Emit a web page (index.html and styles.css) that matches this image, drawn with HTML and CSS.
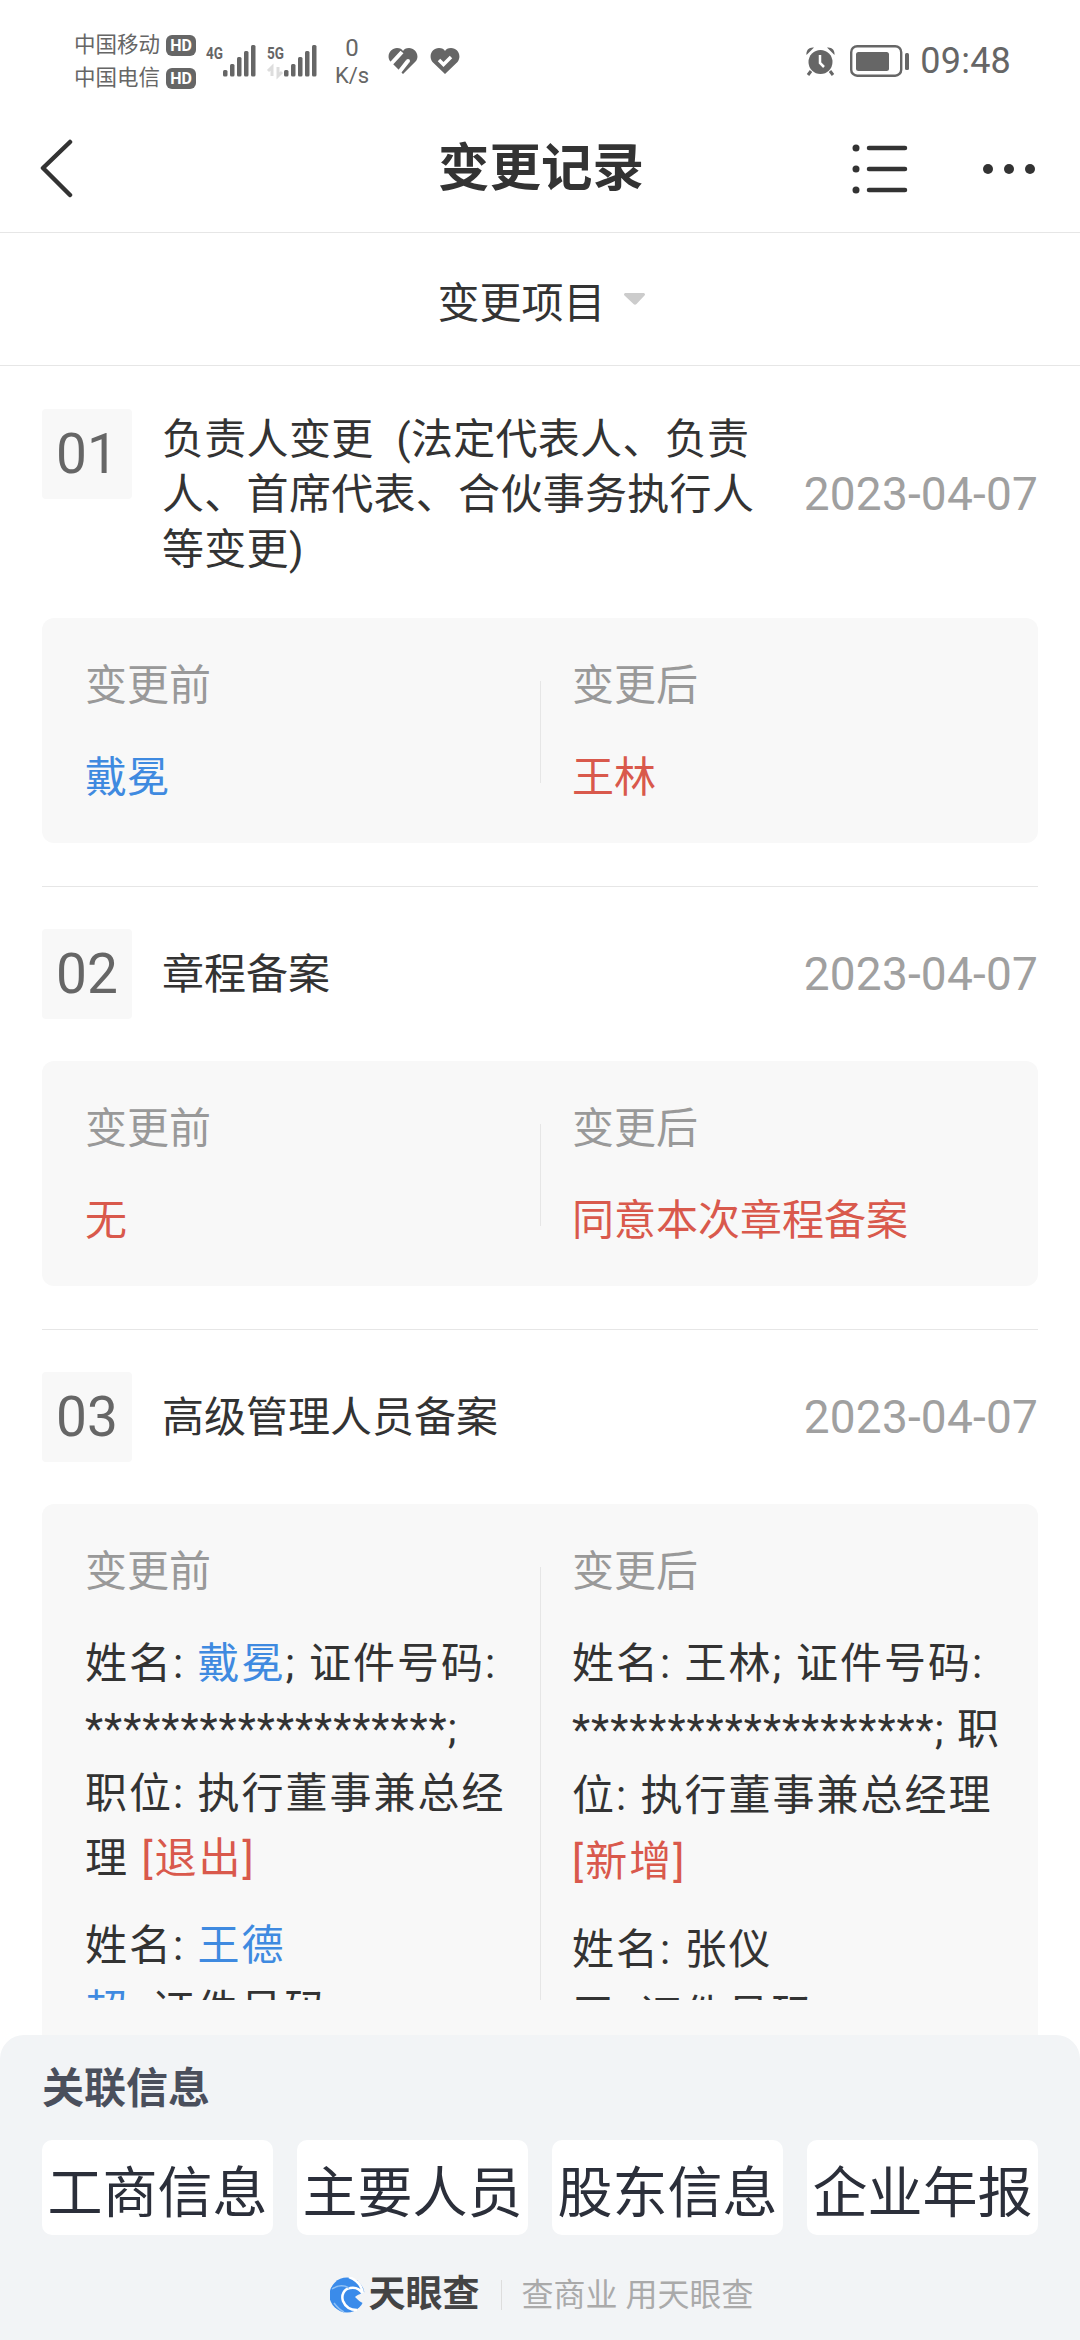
FILE: index.html
```html
<!DOCTYPE html>
<html lang="zh-CN">
<head>
<meta charset="utf-8">
<title>变更记录</title>
<link rel="stylesheet" href="styles.css">
</head>
<body>
<div class="page">
  <div class="status">
    <div class="carriers">
      <div class="carrier"><span>中国移动</span><span class="hd">HD</span></div>
      <div class="carrier"><span>中国电信</span><span class="hd">HD</span></div>
    </div>
    <svg class="signal" width="115" height="40" viewBox="205 40 115 40">
      <text x="206" y="59" class="net" textLength="17" lengthAdjust="spacingAndGlyphs">4G</text>
      <g fill="#666">
        <rect x="223" y="70" width="4.5" height="6.5" rx="1.5"/><rect x="230" y="64" width="4.5" height="12.5" rx="1.5"/><rect x="237" y="57" width="4.5" height="19.5" rx="1.5"/><rect x="244" y="51" width="4.5" height="25.5" rx="1.5"/><rect x="251" y="45" width="4.5" height="31.5" rx="1.5"/>
        <rect x="284" y="70" width="4.5" height="6.5" rx="1.5"/><rect x="291" y="64" width="4.5" height="12.5" rx="1.5"/><rect x="298" y="57" width="4.5" height="19.5" rx="1.5"/><rect x="305" y="51" width="4.5" height="25.5" rx="1.5"/><rect x="312" y="45" width="4.5" height="31.5" rx="1.5"/>
      </g>
      <text x="267" y="59" class="net" textLength="17" lengthAdjust="spacingAndGlyphs">5G</text>
      <path d="M272 76V67L268 71M278 67V76L282 72" fill="none" stroke="#ddd" stroke-width="3"/>
    </svg>
    <div class="speed"><span class="speed-num">0</span><span>K/s</span></div>
    <svg class="heart-a" width="30" height="26" viewBox="0 0 30 26"><path d="M15 26 2 13C-2 7 3 0 9 0c3 0 5 1 6 3 1-2 3-3 6-3 6 0 11 7 7 13Z" fill="#666"/><path d="M2 17 14 4M9 27 19.500 13.500" stroke="#fff" stroke-width="4" fill="none"/><circle cx="20" cy="13" r="2" fill="#fff"/></svg>
    <svg class="heart-b" width="30" height="26" viewBox="0 0 30 26"><path d="M15 26 2.500 14C-2 8 2 0 9 0c3 0 5 1 6 3 1-2 3-3 6-3 7 0 11 8 6.500 14Z" fill="#666"/><path d="m9 12 4.500 4.500L21 9" stroke="#fff" stroke-width="3.500" fill="none"/></svg>
    <span class="status-fill"></span>
    <svg class="alarm" width="31" height="31" viewBox="0 0 31 31"><circle cx="15.500" cy="16" r="12" fill="#666"/><path d="M1.500 9C1 4 4 1 9 1.500ZM29.500 9C30 4 27 1 22 1.500Z" fill="#666"/><path d="m6 25-3 4M25 25l3 4" stroke="#666" stroke-width="3"/><path d="M15 9v8l4 4" stroke="#fff" stroke-width="2.500" fill="none"/></svg>
    <svg class="battery" width="59" height="33" viewBox="0 0 59 33"><rect x="1.200" y="1.200" width="50" height="29.500" rx="6" fill="none" stroke="#666" stroke-width="2.400"/><rect x="6" y="7" width="33" height="19" rx="2.500" fill="#666"/><rect x="55" y="8" width="4" height="17" rx="1.500" fill="#666"/></svg>
    <span class="time">09:48</span>
  </div>

  <header class="nav">
    <div class="nav-left">
      <svg width="34" height="60" viewBox="0 0 34 60"><path d="M30 3 3 29l27 27" fill="none" stroke="#333" stroke-width="4.500" stroke-linecap="round" stroke-linejoin="round"/></svg>
    </div>
    <h1 class="nav-title">变更记录</h1>
    <div class="nav-right">
      <svg width="56" height="50" viewBox="0 0 56 50"><g fill="#333"><circle cx="4" cy="4" r="3.500"/><circle cx="4" cy="25" r="3.500"/><circle cx="4" cy="46" r="3.500"/></g><path d="M17 4h36M17 25h36M17 46h36" stroke="#333" stroke-width="4.500" stroke-linecap="round"/></svg>
      <svg width="52" height="12" viewBox="0 0 52 12"><g fill="#333"><circle cx="5" cy="6" r="5"/><circle cx="26" cy="6" r="5"/><circle cx="47" cy="6" r="5"/></g></svg>
    </div>
  </header>

  <div class="filter">
    <span>变更项目</span>
    <svg class="caret" width="21" height="12" viewBox="0 0 21 12"><path d="M2 0h17c2 0 2.500 1.500 1.500 2.500l-8 8.500c-1 1-2 1-3 0L.500 2.500C-.500 1.500 0 0 2 0Z" fill="#ccc"/></svg>
  </div>

  <main class="list">
    <section class="item">
      <div class="head head-multi">
        <span class="num">01</span>
        <div class="head-title">负责人变更 (法定代表人、负责人、首席代表、合伙事务执行人等变更)</div>
        <span class="date">2023-04-07</span>
      </div>
      <div class="card">
        <div class="cols">
          <div class="col col-before">
            <div class="label">变更前</div>
            <p class="val"><span class="blue">戴冕</span></p>
          </div>
          <div class="rule"></div>
          <div class="col col-after">
            <div class="label">变更后</div>
            <p class="val"><span class="red">王林</span></p>
          </div>
        </div>
      </div>
    </section>

    <section class="item">
      <div class="head">
        <span class="num">02</span>
        <div class="head-title">章程备案</div>
        <span class="date">2023-04-07</span>
      </div>
      <div class="card">
        <div class="cols">
          <div class="col col-before">
            <div class="label">变更前</div>
            <p class="val"><span class="red">无</span></p>
          </div>
          <div class="rule"></div>
          <div class="col col-after">
            <div class="label">变更后</div>
            <p class="val"><span class="red">同意本次章程备案</span></p>
          </div>
        </div>
      </div>
    </section>

    <section class="item item-last">
      <div class="head">
        <span class="num">03</span>
        <div class="head-title">高级管理人员备案</div>
        <span class="date">2023-04-07</span>
      </div>
      <div class="card card-clip">
        <div class="cols cols-clip">
          <div class="col col-before tight">
            <div class="label">变更前</div>
            <p class="val">姓名: <span class="blue">戴冕</span>; 证件号码: <span class="mask">*******************;</span> 职位: 执行董事兼总经理 <span class="red">[退出]</span></p>
            <p class="val">姓名: <span class="blue">王德<br>超</span>; 证件号码:</p>
          </div>
          <div class="rule rule-full"></div>
          <div class="col col-after">
            <div class="label">变更后</div>
            <p class="val">姓名: 王林; 证件号码: <span class="mask">*******************;</span> 职位: 执行董事兼总经理 <span class="red">[新增]</span></p>
            <p class="val">姓名: 张仪<br>平; 证件号码:</p>
          </div>
        </div>
      </div>
    </section>
  </main>

  <aside class="sheet">
    <h2 class="sheet-title">关联信息</h2>
    <nav class="chips">
      <span class="chip">工商信息</span>
      <span class="chip">主要人员</span>
      <span class="chip">股东信息</span>
      <span class="chip">企业年报</span>
    </nav>
    <div class="brand">
      <svg width="35" height="36" viewBox="0 0 35 36"><circle cx="17" cy="18" r="17.500" fill="#3a8bea"/><path d="M19 0C27 3 32 9 33 17 30 12 25 10 20 11 14 12 11 18 13 24 15 29 20 33 27 33" fill="none" stroke="#fff" stroke-width="2.500"/><path d="M35 15c-3 1-8 3-10 5 3 3 5 5 10 7" fill="#f2f4f6"/><path d="M2 12C8 8 14 8 19 11M4 26c3 4 6 7 10 9" fill="none" stroke="#8fc0f5" stroke-width="1.500"/></svg>
      <span class="brand-name">天眼查</span>
      <span class="brand-rule"></span>
      <span class="brand-tag">查商业 用天眼查</span>
    </div>
  </aside>
</div>
</body>
</html>
```
FILE: styles.css
```css
* { box-sizing: border-box; }
html, body { margin: 0; padding: 0; background: #fff; }
body { font-family: Roboto, "Noto Sans CJK SC", sans-serif; color: #333; }
h1, h2, p { margin: 0; font-weight: inherit; font-size: inherit; }

.page { position: relative; width: 1080px; height: 2340px; overflow: hidden; background: #fff; }

/* status bar */
.status { display: flex; align-items: center; height: 105px; padding: 18px 69px 0 74px; color: #666; }
.carriers { display: flex; flex-direction: column; gap: 1px; width: 126px; flex: none; }
.carrier { display: flex; align-items: center; height: 32px; font-size: 21.500px; line-height: 32px; gap: 6px; white-space: nowrap; }
.hd { display: inline-block; width: 30px; height: 21px; background: #666; color: #fff; border-radius: 6px; font-size: 16px; font-weight: 700; line-height: 21px; text-align: center; }
.signal { flex: none; margin: -4px 0 0 5px; }
.net { font-family: Roboto, sans-serif; font-weight: 700; font-size: 17px; fill: #666; }
.speed { display: flex; flex-direction: column; align-items: center; width: 40px; margin: 1px 0 0 12px; font-size: 22px; line-height: 28px; flex: none; }
.speed-num { font-size: 24px; }
.heart-a { margin: -1px 0 0 16px; flex: none; }
.heart-b { margin: -1px 0 0 12px; flex: none; }
.status-fill { flex: 1; }
.alarm { flex: none; margin: -1px 14px 0 0; }
.battery { flex: none; margin: -1px 11px 0 0; }
.time { font-size: 36px; line-height: 40px; letter-spacing: .200px; margin-top: -1px; }

/* nav */
.nav { display: grid; grid-template-columns: 1fr auto 1fr; align-items: center; height: 129px; padding: 2px 44px 0 46px; border-bottom: 1px solid #e6e6e6; margin-top: -1px; }
.nav-left { display: flex; align-items: center; margin-left: -6px; }
.nav-title { font-size: 51.500px; font-weight: 700; color: #333; line-height: 60px; }
.nav-right { display: flex; align-items: center; justify-content: flex-end; gap: 75px; margin-right: 1px; }

/* filter */
.filter { display: flex; align-items: center; justify-content: center; height: 133px; padding-left: 2px; font-size: 42px; border-bottom: 1px solid #e6e6e6; }
.caret { margin-left: 18px; }

/* items */
.list { padding-top: 1px; }
.item { margin: 0 42px; padding: 42px 0 43px; border-bottom: 1px solid #e6e6e6; }
.item-last { border-bottom: 0; padding-bottom: 0; }
.head { display: flex; align-items: center; min-height: 90px; margin-bottom: 42px; }
.head-multi { margin-bottom: 44px; }
.num { flex: none; align-self: flex-start; width: 90px; height: 90px; background: #f8f8f8; border-radius: 4px; color: #666; font-size: 55px; line-height: 90px; text-align: center; }
.head-title { flex: 0 0 600px; margin-left: 30px; font-size: 42px; line-height: 55px; color: #333; }
.date { flex: none; margin-left: auto; color: #a0a0a0; font-size: 46px; line-height: 55px; letter-spacing: .2px; }
.head-multi .head-title, .head-multi .date { padding-top: 3px; margin-bottom: -3px; }
.head-multi .head-title { letter-spacing: .3px; word-spacing: 12px; }

.card { background: #f8f8f8; border-radius: 12px; padding: 40px 0 32px; }
.card-clip { padding-bottom: 60px; }
.cols { display: flex; }
.cols-clip { height: 456px; overflow: hidden; }
.col { flex: none; }
.col-before { width: 498px; padding: 0 32px 0 43px; }
.col-after { flex: 1; min-width: 0; padding: 0 26px 0 31px; }
.rule { flex: none; width: 1px; background: #e6e6e6; margin: 23px 0 28px; }
.rule-full { margin-bottom: 0; }
.label { font-size: 42px; line-height: 56px; color: #999; margin-bottom: 31px; }
.val { font-size: 42px; line-height: 66px; color: #333; margin-bottom: 22px; }
.val:last-child { margin-bottom: 0; }
.cols-clip .val { letter-spacing: 2px; }
.cols-clip .mask { letter-spacing: 1px; }
.tight .val { line-height: 65px; }
.blue { color: #3f8ae0; }
.red { color: #d9594c; }

/* bottom sheet */
.sheet { position: absolute; left: 0; right: 0; top: 2035px; bottom: 0; background: #f2f4f6; border-radius: 24px 24px 0 0; padding: 0 42px; }
.sheet-title { font-size: 42px; font-weight: 700; line-height: 56px; color: #4a4f5c; padding-top: 26px; box-sizing: content-box; }
.chips { display: flex; justify-content: space-between; margin-top: 23px; }
.chip { display: flex; align-items: center; justify-content: center; width: 231px; height: 95px; background: #fff; border-radius: 10px; color: #2b2f3a; font-size: 55px; white-space: nowrap; }
.brand { display: flex; align-items: center; justify-content: center; margin-top: 42px; height: 36px; padding-left: 3px; }
.brand-name { margin-left: 4px; font-size: 37px; font-weight: 700; color: #444; line-height: 36px; }
.brand-rule { width: 1px; height: 30px; background: #ddd; margin: 0 20px 0 21px; }
.brand-tag { font-size: 32px; color: #aaa; line-height: 36px; white-space: nowrap; }
```
